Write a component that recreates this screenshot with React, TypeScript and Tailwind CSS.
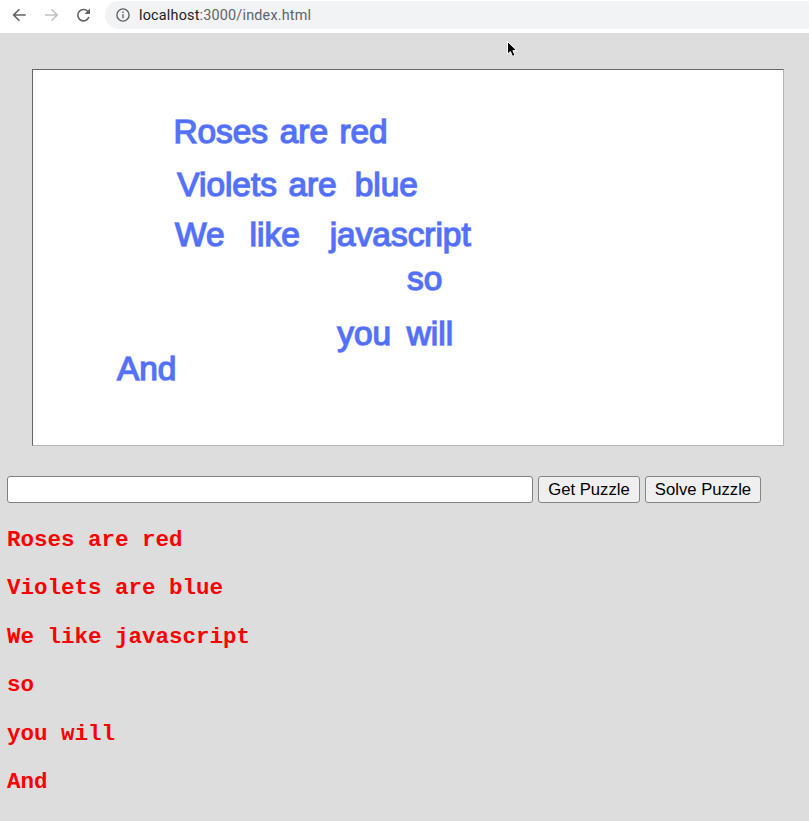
import React from 'react';

type Word = { text: string; x: number; y: number };

const words: Word[] = [
  { text: 'Roses', x: 173.4, y: 143.2 },
  { text: 'are', x: 279.7, y: 143.2 },
  { text: 'red', x: 339.4, y: 143.2 },
  { text: 'Violets', x: 177.3, y: 195.8 },
  { text: 'are', x: 288.4, y: 195.8 },
  { text: 'blue', x: 354.7, y: 195.8 },
  { text: 'We', x: 175, y: 245.8 },
  { text: 'like', x: 249.6, y: 245.8 },
  { text: 'javascript', x: 329.7, y: 245.8 },
  { text: 'so', x: 407, y: 290 },
  { text: 'you', x: 337.2, y: 344.8 },
  { text: 'will', x: 406.7, y: 344.8 },
  { text: 'And', x: 117, y: 379.6 },
];

const lines = ['Roses are red', 'Violets are blue', 'We like javascript', 'so', 'you will', 'And'];

function Toolbar() {
  return (
    <header className="flex h-[33px] shrink-0 items-start bg-white pt-px">
      <div className="flex h-7 w-[105px] shrink-0 items-center">
        <svg width="105" height="28" viewBox="0 1 105 28" fill="none" strokeWidth="1.6">
          <path d="M25.8 15H13.8M19.4 9.2L13.6 15L19.4 20.8" stroke="#5f6368" />
          <path d="M45 15H57M51.4 9.2L57.2 15L51.4 20.8" stroke="#bdc1c6" />
          <path d="M88.2 11.9A5.7 5.7 0 1 0 88.9 17" stroke="#5f6368" />
          <path d="M90 8.6V14H84.6Z" fill="#5f6368" />
        </svg>
      </div>
      <div className="flex h-7 flex-1 items-center rounded-l-full bg-[#f1f3f4] pl-[11px]">
        <svg width="14" height="14" viewBox="0 0 14 14" fill="none">
          <circle cx="7" cy="7" r="6.1" stroke="#5f6368" strokeWidth="1.4" />
          <path d="M7 6.2V10.3M7 3.5V5" stroke="#5f6368" strokeWidth="1.4" />
        </svg>
        <span className="ml-[9px] mt-[2px] whitespace-nowrap font-[Roboto,sans-serif] text-[14.4px] leading-[26px] tracking-[0.19px] text-[#5f6368]">
          <span className="text-[#202124]">localhost</span>:3000/index.html
        </span>
      </div>
    </header>
  );
}

function PuzzleButton({ children, className }: { children: React.ReactNode; className: string }) {
  return (
    <button
      className={`h-[27px] rounded-[3px] border border-[#858585] bg-[#efefef] text-center font-['Liberation_Sans',Arial,sans-serif] text-[16.67px] leading-[25px] text-black ${className}`}
    >
      {children}
    </button>
  );
}

export default function App() {
  return (
    <div className="relative flex h-[821px] w-[809px] flex-col overflow-hidden bg-[#ddd]">
      <Toolbar />
      <svg
        className="absolute left-[506px] top-[40px]"
        width="14"
        height="20"
        viewBox="0 0 14 20"
      >
        <path
          d="M1.5 1.5V14.2L4.4 11.5L6.5 16.4L9 15.3L6.9 10.6H10.8Z"
          fill="#000"
          stroke="#fff"
          strokeWidth="1"
        />
      </svg>
      <div className="ml-8 mt-9 h-[377px] w-[752px] shrink-0 border border-b-[#b5b5b5] border-l-[#666] border-r-[#b5b5b5] border-t-[#666] bg-white">
        <svg width="750" height="375" viewBox="33 70 750 375">
          {words.map((w, i) => (
            <text
              key={i}
              x={w.x}
              y={w.y}
              className="fill-[#5577f4] stroke-[#4a66ff]/80 stroke-[1.5px] font-['Liberation_Sans',Arial,sans-serif] text-[33.4px]"
            >
              {w.text}
            </text>
          ))}
        </svg>
      </div>
      <div className="mt-[30px] flex h-[27px] pl-[7px]">
        <input className="h-[27px] w-[526px] rounded-[3px] border border-[#808080] bg-white outline-none" />
        <PuzzleButton className="ml-[5px] w-[102px]">Get Puzzle</PuzzleButton>
        <PuzzleButton className="ml-[5px] w-[116px]">Solve Puzzle</PuzzleButton>
      </div>
      <div className="mt-[24px] flex flex-col gap-[22.4px] pl-[7px] font-['Liberation_Mono','Courier_New',monospace] text-[22.5px] font-bold leading-[26px]">
        {lines.map((line) => (
          <h3 key={line} className="text-[#f00]">
            {line}
          </h3>
        ))}
      </div>
    </div>
  );
}
